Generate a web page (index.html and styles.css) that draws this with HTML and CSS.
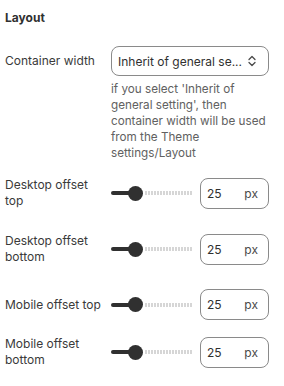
FILE: index.html
```html
<!DOCTYPE html>
<html>
<head>
<meta charset="utf-8">
<link rel="stylesheet" href="styles.css">
</head>
<body>
<div class="panel">
  <h2 class="title">Layout</h2>
  <div class="row row-select">
    <div class="label">Container width</div>
    <div class="control">
      <div class="select">
        <span class="select-text">Inherit of general se...</span>
        <svg class="chev" width="10" height="12" viewBox="0 0 10 12"><path d="M2 4.5 L5 1.5 L8 4.5 M2 7.5 L5 10.5 L8 7.5" fill="none" stroke="#4a4a4a" stroke-width="1.3" stroke-linecap="round" stroke-linejoin="round"/></svg>
      </div>
      <p class="help">if you select 'Inherit of general setting', then container width will be used from the Theme settings/Layout</p>
    </div>
  </div>

  <div class="row range-row r1">
    <div class="label">Desktop offset top</div>
    <div class="slider"><span class="fill"></span><span class="thumb"></span><span class="rest"></span></div>
    <div class="num"><span>25</span><span class="unit">px</span></div>
  </div>
  <div class="row range-row r2">
    <div class="label">Desktop offset bottom</div>
    <div class="slider"><span class="fill"></span><span class="thumb"></span><span class="rest"></span></div>
    <div class="num"><span>25</span><span class="unit">px</span></div>
  </div>
  <div class="row range-row r3">
    <div class="label">Mobile offset top</div>
    <div class="slider"><span class="fill"></span><span class="thumb"></span><span class="rest"></span></div>
    <div class="num"><span>25</span><span class="unit">px</span></div>
  </div>
  <div class="row range-row r4">
    <div class="label">Mobile offset bottom</div>
    <div class="slider"><span class="fill"></span><span class="thumb"></span><span class="rest"></span></div>
    <div class="num"><span>25</span><span class="unit">px</span></div>
  </div>
</div>
</body>
</html>
```

FILE: styles.css
```css
html, body {
  margin: 0;
  padding: 0;
  background: #ffffff;
}
body {
  font-family: Inter, "Noto Sans", sans-serif;
  font-size: 12px;
  color: #303030;
}
.panel {
  padding: 10px 15px 0 5px;
}
.title {
  margin: 0;
  font-size: 12px;
  font-weight: 650;
  line-height: 16px;
  color: #303030;
}
.row {
  display: flex;
  align-items: flex-start;
}
.row-select {
  margin-top: 20px;
}
.label {
  width: 100px;
  flex: none;
  line-height: 16px;
  margin-right: 6px;
  color: #3a3a3a;
}
.row-select .label {
  padding-top: 7px;
}
.control {
  flex: 1;
}
.select {
  height: 30px;
  box-sizing: border-box;
  border: 1px solid #8a8a8a;
  border-radius: 8px;
  display: flex;
  align-items: center;
  padding: 0 11px 0 6px;
}
.select-text {
  flex: 1;
  color: #303030;
  white-space: nowrap;
}
.chev {
  display: block;
}
.help {
  margin: 5px 0 0;
  font-size: 11.7px;
  line-height: 16px;
  color: #616161;
}
.range-row {
  align-items: center;
}
.r1 { margin-top: 16px; }
.r2 { margin-top: 24px; }
.r3 { margin-top: 24px; }
.r4 { margin-top: 16px; }
.slider {
  width: 81px;
  flex: none;
  position: relative;
  height: 16px;
  display: flex;
  align-items: center;
  margin-right: 8px;
}
.fill {
  width: 19px;
  height: 4px;
  background: #303030;
  border-radius: 2px 0 0 2px;
}
.thumb {
  width: 15px;
  height: 15px;
  border-radius: 50%;
  background: #303030;
  margin-left: -2px;
  flex: none;
}
.rest {
  flex: 1;
  height: 4px;
  margin-left: 2px;
  background: repeating-linear-gradient(90deg, #d6d6d6 0 2px, transparent 2px 3px);
}
.num {
  width: 69px;
  height: 31px;
  box-sizing: border-box;
  border: 1px solid #8a8a8a;
  border-radius: 8px;
  display: flex;
  align-items: center;
  justify-content: space-between;
  padding: 0 10px 0 6px;
  font-size: 12px;
  color: #303030;
}
.unit {
  color: #4a4a4a;
}
```
